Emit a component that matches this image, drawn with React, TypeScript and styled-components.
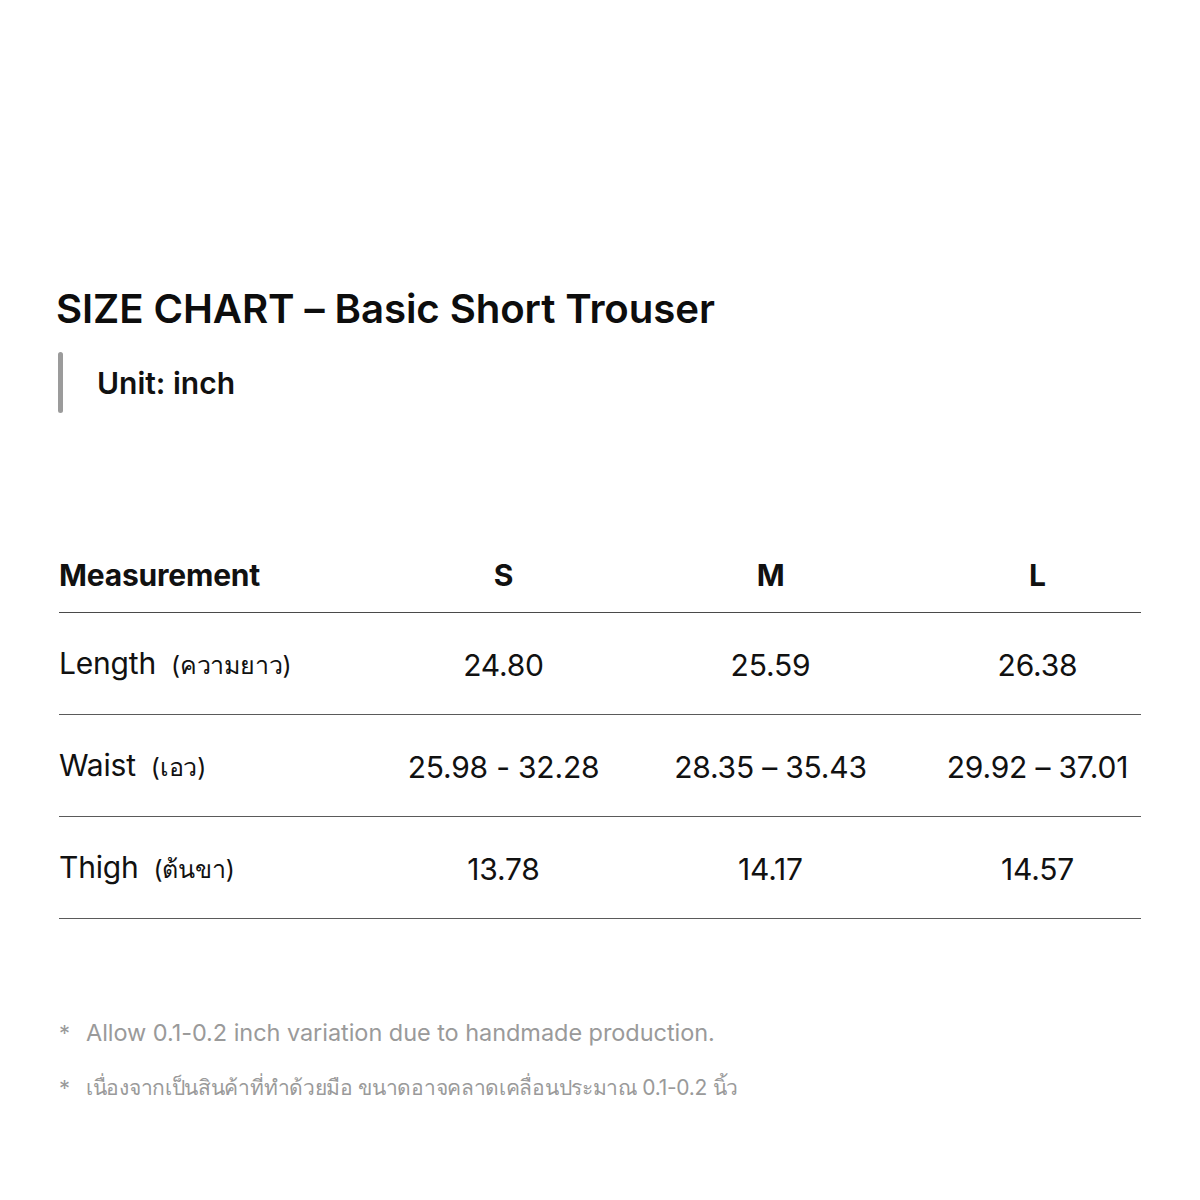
import React from "react";
import styled, { createGlobalStyle } from "styled-components";

const Global = createGlobalStyle`
  html, body { margin: 0; padding: 0; background: #ffffff; }
  body { font-family: Inter, "Noto Sans", "DejaVu Sans", sans-serif; color: #111; }
`;

const Page = styled.div`
  width: 1200px;
  height: 1200px;
  box-sizing: border-box;
  padding: 284px 59px 0 56px;
  display: flex;
  flex-direction: column;
`;

const Title = styled.h1`
  margin: 0;
  font-size: 40.2px;
  line-height: 50px;
  font-weight: 600;
  letter-spacing: -0.1px;
  color: #0d0d0d;
`;

const UnitRow = styled.div`
  margin-top: 18px;
  margin-left: 2px;
  display: flex;
  align-items: center;
  gap: 34px;
  height: 61px;
`;

const UnitBar = styled.div`
  width: 5px;
  height: 61px;
  border-radius: 3px;
  background: #9b9b9b;
`;

const UnitText = styled.div`
  font-size: 30px;
  font-weight: 600;
  color: #111;
`;

const Table = styled.div`
  margin-top: 125px;
  margin-left: 3px;
  width: 1082px;
  display: flex;
  flex-direction: column;
`;

const Row = styled.div<{ $header?: boolean }>`
  display: grid;
  grid-template-columns: 311px 267px 267px 237px;
  align-items: center;
  height: ${(p) => (p.$header ? "74px" : "101px")};
  border-bottom: 1.5px solid ${(p) => (p.$header ? "#4a4a4a" : "#5a5a5a")};
`;

const Cell = styled.div<{ $header?: boolean; $first?: boolean; $last?: boolean }>`
  font-size: 30px;
  font-weight: ${(p) => (p.$header ? 700 : 400)};
  text-align: ${(p) => (p.$first ? "left" : "center")};
  padding-left: ${(p) => (p.$last ? "30px" : "0")};
  padding-top: ${(p) => (p.$header ? "0" : "2px")};
  color: #111;
  white-space: nowrap;
  letter-spacing: ${(p) => (p.$header ? "-0.2px" : "-0.2px")};
`;

const Thai = styled.span`
  font-size: 25px;
  margin-left: 15px;
`;

const Notes = styled.div`
  margin-top: 99px;
  margin-left: 3px;
  display: flex;
  flex-direction: column;
  gap: 25px;
`;

const Note = styled.div<{ $thai?: boolean }>`
  display: flex;
  gap: 19px;
  font-size: ${(p) => (p.$thai ? "21px" : "23.5px")};
  line-height: 30px;
  color: #9a9a9a;
  letter-spacing: ${(p) => (p.$thai ? "-0.3px" : "-0.05px")};
`;

const Star = styled.span`
  font-size: 22px;
  width: 8px;
`;

const rows = [
  { name: "Length", thai: "(ความยาว)", v: ["24.80", "25.59", "26.38"] },
  { name: "Waist", thai: "(เอว)", v: ["25.98 - 32.28", "28.35 – 35.43", "29.92 – 37.01"] },
  { name: "Thigh", thai: "(ต้นขา)", v: ["13.78", "14.17", "14.57"] },
];

export default function App() {
  return (
    <>
      <Global />
      <Page>
        <Title>SIZE CHART – Basic Short Trouser</Title>
        <UnitRow>
          <UnitBar />
          <UnitText>Unit: inch</UnitText>
        </UnitRow>
        <Table>
          <Row $header>
            <Cell $header $first>Measurement</Cell>
            <Cell $header>S</Cell>
            <Cell $header>M</Cell>
            <Cell $header $last>L</Cell>
          </Row>
          {rows.map((r) => (
            <Row key={r.name}>
              <Cell $first>
                {r.name}
                <Thai>{r.thai}</Thai>
              </Cell>
              <Cell>{r.v[0]}</Cell>
              <Cell>{r.v[1]}</Cell>
              <Cell $last>{r.v[2]}</Cell>
            </Row>
          ))}
        </Table>
        <Notes>
          <Note>
            <Star>*</Star>
            <span>Allow 0.1-0.2 inch variation due to handmade production.</span>
          </Note>
          <Note $thai>
            <Star>*</Star>
            <span>เนื่องจากเป็นสินค้าที่ทำด้วยมือ ขนาดอาจคลาดเคลื่อนประมาณ 0.1-0.2 นิ้ว</span>
          </Note>
        </Notes>
      </Page>
    </>
  );
}
